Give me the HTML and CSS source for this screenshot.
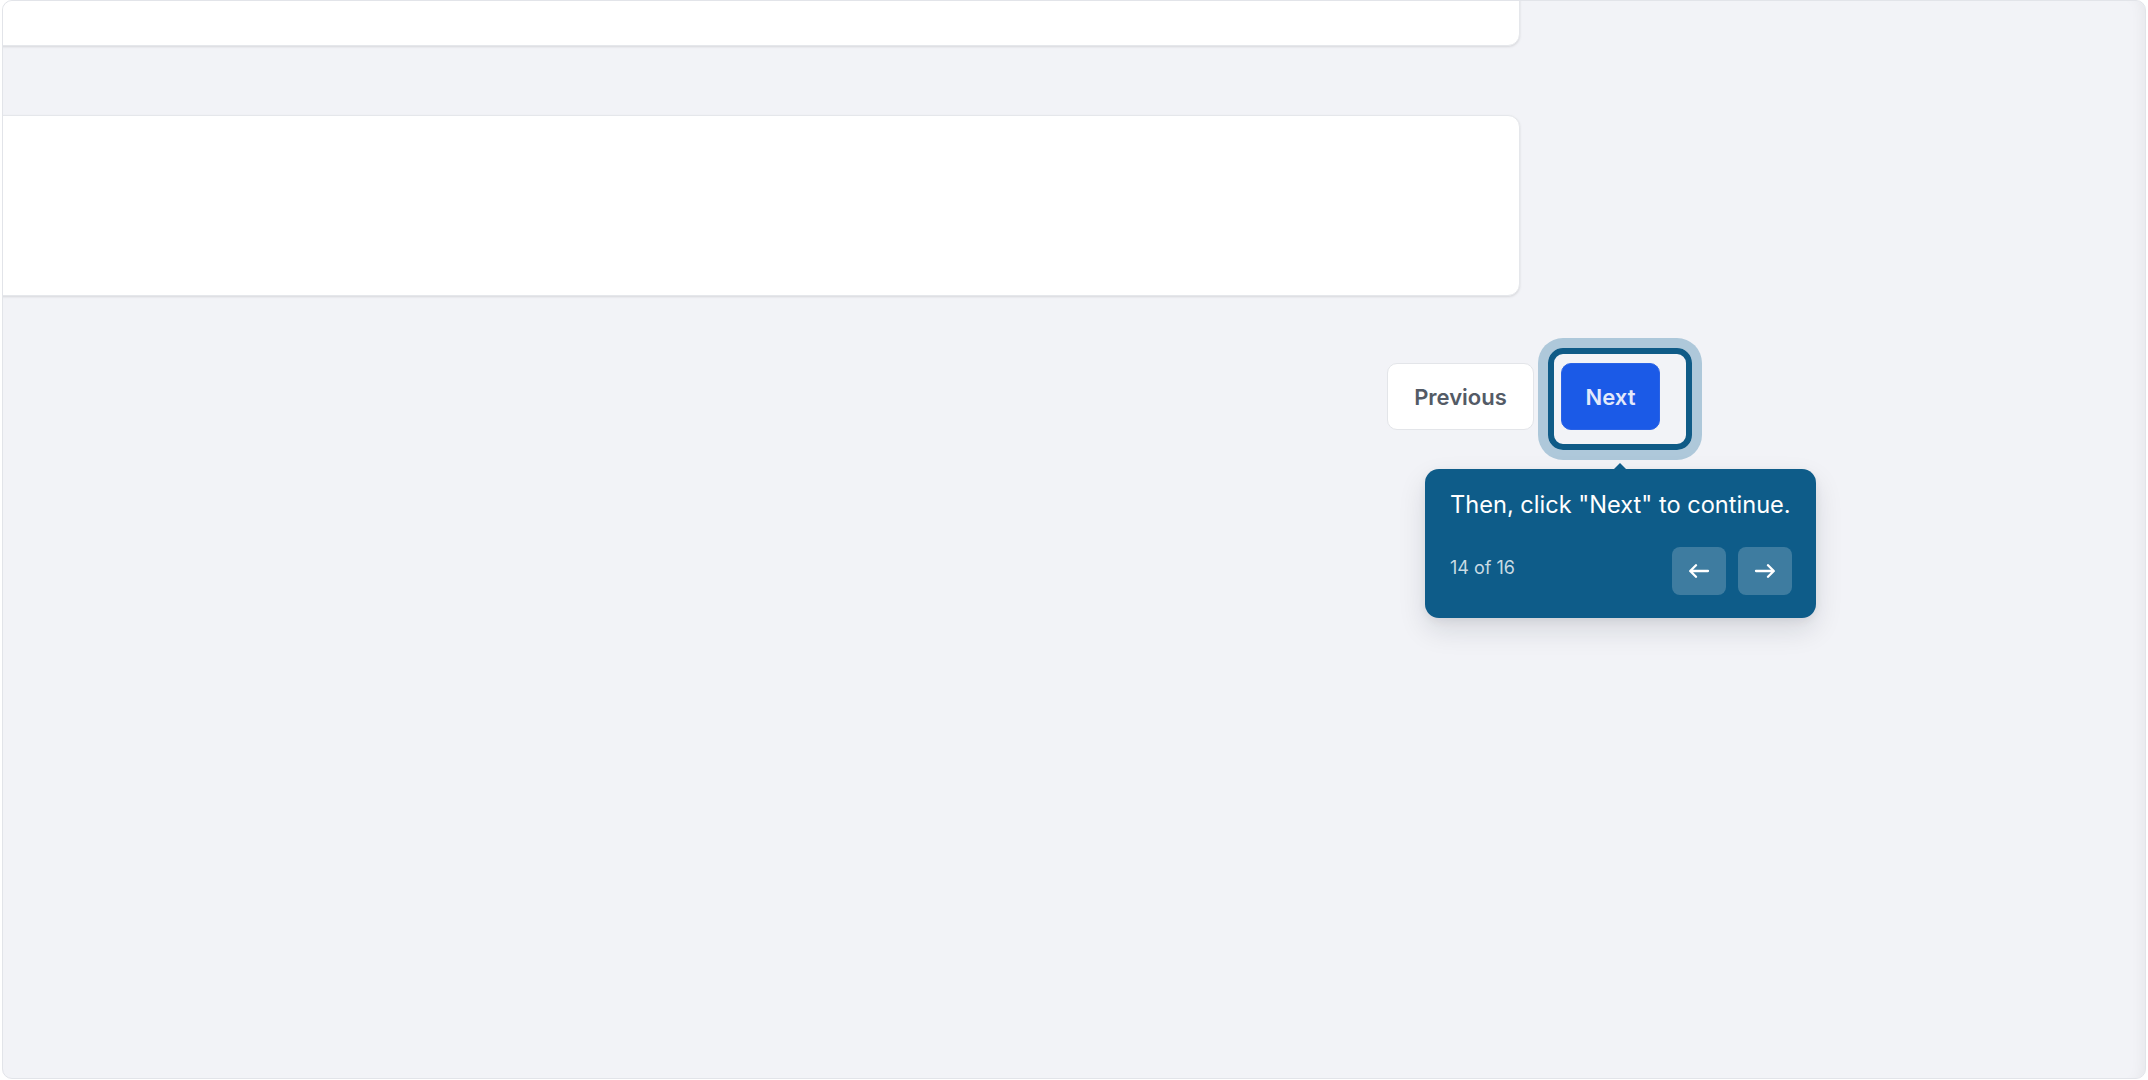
FILE: index.html
```html
<!DOCTYPE html>
<html lang="en">
<head>
<meta charset="utf-8">
<title>Tour step</title>
<link rel="stylesheet" href="styles.css">
</head>
<body>
<div class="frame">
  <div class="cards">
    <div class="card card-top"></div>
    <div class="card card-main"></div>
  </div>
  <div class="actions">
    <button class="btn btn-secondary">Previous</button>
    <button class="btn btn-primary">Next</button>
  </div>
  <div class="highlight"></div>
  <div class="tooltip">
    <div class="tip-arrow"></div>
    <p class="tip-text">Then, click "Next" to continue.</p>
    <div class="tip-footer">
      <span class="tip-count">14 of 16</span>
      <div class="tip-nav">
        <button class="tip-btn" aria-label="Previous step">
          <svg width="22" height="14" viewBox="0 0 22 14" fill="none" stroke="#fff" stroke-width="2.3" stroke-linecap="round" stroke-linejoin="round"><path d="M20 7H2.5M8 1.2L2.2 7L8 12.8"/></svg>
        </button>
        <button class="tip-btn" aria-label="Next step">
          <svg width="22" height="14" viewBox="0 0 22 14" fill="none" stroke="#fff" stroke-width="2.3" stroke-linecap="round" stroke-linejoin="round"><path d="M2 7H19.5M14 1.2L19.8 7L14 12.8"/></svg>
        </button>
      </div>
    </div>
  </div>
</div>
</body>
</html>
```

FILE: styles.css
```css
* { box-sizing: border-box; }

html, body {
  margin: 0;
  padding: 0;
  background: #ffffff;
  font-family: Inter, "Noto Sans", "Liberation Sans", sans-serif;
}

.frame {
  position: relative;
  margin-left: 2px;
  width: 2144px;
  height: 1079px;
  border: 1px solid #e2e4e9;
  border-radius: 10px;
  background: #f2f3f7;
  overflow: hidden;
  box-shadow: inset -14px 0 14px -12px rgba(0, 0, 0, 0.06);
}

.cards {
  display: flex;
  flex-direction: column;
  gap: 69px;
  margin-left: -40px;
  margin-right: 625px;
  margin-top: -55px;
}

.card {
  background: #ffffff;
  border: 1px solid #e5e7eb;
  border-radius: 12px;
  box-shadow: 0 1px 3px rgba(0, 0, 0, 0.08), 0 1px 2px rgba(0, 0, 0, 0.04);
}

.card-top { height: 100px; }
.card-main { height: 181px; }

.actions {
  display: flex;
  gap: 27px;
  margin-top: 67px;
  padding-left: 1384px;
}

.btn {
  height: 67px;
  border-radius: 10px;
  font-family: Inter, "Noto Sans", "Liberation Sans", sans-serif;
  font-size: 22px;
  font-weight: 600;
  cursor: pointer;
}

.btn-secondary {
  width: 147px;
  background: #ffffff;
  border: 1px solid #e3e5e9;
  color: #545b66;
}

.btn-primary {
  width: 99px;
  background: #1b5ae7;
  border: 1px solid #2a63e6;
  color: #e2e9fb;
}

.highlight {
  position: absolute;
  left: 1545px;
  top: 347px;
  width: 144px;
  height: 102px;
  border: 6px solid #0f5b87;
  border-radius: 15px;
  box-shadow: 0 0 0 10px #aec8da;
}

.tooltip {
  position: absolute;
  left: 1422px;
  top: 468px;
  width: 391px;
  padding: 22px 24px 23px 25px;
  background: #0e5c89;
  border-radius: 14px;
  color: #ffffff;
  box-shadow: 0 12px 28px rgba(15, 23, 42, 0.12), 0 3px 8px rgba(15, 23, 42, 0.06);
}

.tip-arrow {
  position: absolute;
  left: 188px;
  top: -6px;
  width: 0;
  height: 0;
  border-left: 7px solid transparent;
  border-right: 7px solid transparent;
  border-bottom: 7px solid #0e5c89;
}

.tip-text {
  margin: 0;
  font-size: 23.6px;
  line-height: 28px;
  font-weight: 400;
  white-space: nowrap;
}

.tip-footer {
  display: flex;
  align-items: center;
  justify-content: space-between;
  margin-top: 28px;
}

.tip-count {
  font-size: 18px;
  line-height: 24px;
  color: rgba(255, 255, 255, 0.78);
  margin-top: -6px;
}

.tip-nav {
  display: flex;
  gap: 12px;
}

.tip-btn {
  width: 54px;
  height: 48px;
  display: flex;
  align-items: center;
  justify-content: center;
  padding: 0;
  border: none;
  border-radius: 8px;
  background: rgba(255, 255, 255, 0.2);
  cursor: pointer;
}
```
